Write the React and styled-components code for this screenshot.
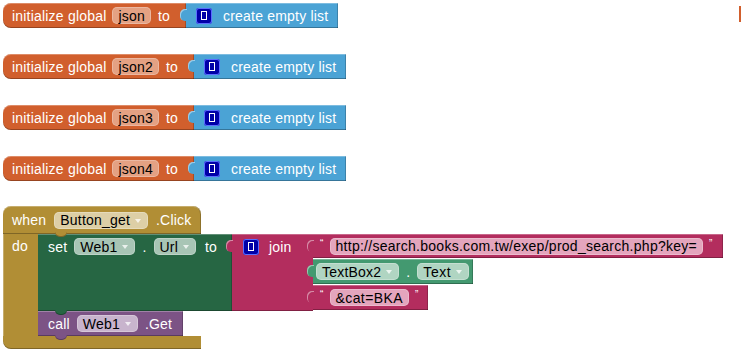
import React from "react";
import styled, { createGlobalStyle } from "styled-components";

const Global = createGlobalStyle`
  html, body { margin: 0; padding: 0; background: #fff; }
  body {
    font-family: "Liberation Sans", Arial, sans-serif;
    font-size: 14px;
    letter-spacing: 0.2px;
  }
`;

const ORANGE = "#d15f2d";
const BLUE = "#4ba3d5";
const GOLD = "#b18e35";
const GREEN = "#266643";
const MAGENTA = "#b32d5e";
const PURPLE = "#7c5385";
const TEAL = "#439970";

const Workspace = styled.div`
  position: relative;
  width: 741px;
  height: 352px;
  overflow: hidden;
  padding: 3px 0 0 3px;
  box-sizing: border-box;
  display: flex;
  flex-direction: column;
  align-items: flex-start;
  gap: 26px;
`;

const Row = styled.div`
  display: flex;
  align-items: ${(p) => p.$align ?? "stretch"};
  gap: ${(p) => p.$gap ?? 0}px;
  height: ${(p) => (p.$h ? `${p.$h}px` : "auto")};
`;

const Block = styled.div`
  position: relative;
  display: flex;
  align-items: center;
  gap: ${(p) => p.$gap ?? 7}px;
  height: ${(p) => p.$h ?? 25}px;
  width: ${(p) => (p.$w ? `${p.$w}px` : "auto")};
  padding: 0 ${(p) => p.$pr ?? 8}px 0 ${(p) => p.$pl ?? 9}px;
  background: ${(p) => p.$c};
  color: #fff;
  white-space: nowrap;
  box-sizing: border-box;
  border-radius: ${(p) => p.$r ?? "0"};
  box-shadow: inset 0 1px 0 rgba(255, 255, 255, 0.28),
    inset 0 -1px 0 rgba(0, 0, 0, 0.28), inset -1px 0 0 rgba(0, 0, 0, 0.2);
`;

/* output tab of a value block, sticking into its parent's socket */
const Value = styled(Block)`
  &::before {
    content: "";
    position: absolute;
    left: -6px;
    top: ${(p) => p.$tab ?? 6}px;
    width: 7px;
    height: 12px;
    background: ${(p) => p.$c};
    border-radius: 5px 0 0 5px;
    box-shadow: inset 1px 1px 0 rgba(255, 255, 255, 0.45);
  }
`;

/* statement block with the tab under it that the next block hooks onto */
const Statement = styled(Block)`
  &::after {
    content: "";
    position: absolute;
    left: 17px;
    bottom: -4px;
    width: 12px;
    height: 5px;
    background: ${(p) => p.$c};
    border-radius: 0 0 5px 5px;
    box-shadow: inset 0 -1px 0 rgba(0, 0, 0, 0.28);
    z-index: 2;
  }
`;

const Field = styled.span`
  display: inline-flex;
  align-items: center;
  gap: 5px;
  height: 17px;
  padding: 0 ${(p) => (p.$drop ? 7 : 6)}px 0 6px;
  border-radius: 5px;
  background: ${(p) => p.$bg};
  color: #000;
  letter-spacing: ${(p) => p.$ls ?? 0.2}px;
  box-shadow: inset 0 0 0 1px rgba(255, 255, 255, 0.25);
`;

const Arrow = styled.span`
  width: 0;
  height: 0;
  border-left: 3px solid transparent;
  border-right: 3px solid transparent;
  border-top: 4px solid rgba(255, 255, 255, 0.75);
  margin-top: 1px;
`;

const ListIcon = styled.span`
  display: inline-flex;
  align-items: center;
  justify-content: center;
  flex: none;
  width: 16px;
  height: 16px;
  border-radius: 3px;
  background: #0000a8;
  box-shadow: inset 0 0 0 1px #5a6cff;
  &::after {
    content: "";
    width: 4px;
    height: 7px;
    border: 1px solid #fff;
  }
`;

const Quote = styled.span`
  font-size: 10px;
  align-self: flex-start;
  margin-top: 4px;
`;

/* event block */
const Event = styled.div`
  display: flex;
  flex-direction: column;
  align-items: flex-start;
  margin-top: -1px;
`;

const EventHead = styled(Statement)`
  width: 198px;
  height: 28px;
  gap: 8px;
  border-radius: 8px 8px 0 0;
  &::after {
    left: 52px;
    bottom: -3px;
  }
`;

const DoCol = styled.div`
  width: 35px;
  background: ${GOLD};
  color: #fff;
  padding: 4px 0 0 9px;
  box-sizing: border-box;
  box-shadow: inset 1px 0 0 rgba(255, 255, 255, 0.28);
`;

const Stack = styled.div`
  display: flex;
  flex-direction: column;
  align-items: flex-start;
`;

const SetBlock = styled(Statement)`
  width: 194px;
  height: 77px;
  align-items: flex-start;
  padding-top: 3px;
  padding-left: 10px;
`;

const JoinBlock = styled(Value)`
  width: 81px;
  height: 77px;
  align-items: flex-start;
  padding: 3px 0 0 11px;
  gap: 10px;
  box-shadow: inset 0 1px 0 rgba(255, 255, 255, 0.28),
    inset 0 -1px 0 rgba(0, 0, 0, 0.28);
`;

const JoinLabel = styled.div`
  display: flex;
  align-items: center;
  gap: 10px;
  height: 19px;
`;

const Inputs = styled.div`
  display: flex;
  flex-direction: column;
  align-items: flex-start;
  gap: 1px;
`;

const EventFoot = styled.div`
  width: 198px;
  height: 13px;
  background: ${GOLD};
  border-radius: 0 0 0 8px;
  box-shadow: inset 0 -1px 0 rgba(0, 0, 0, 0.28);
`;

const Stray = styled.div`
  position: absolute;
  left: 739px;
  top: 6px;
  width: 2px;
  height: 16px;
  background: ${ORANGE};
`;

const GlobalInit = ({ name }) => (
  <Row>
    <Block $c={ORANGE} $r="8px 0 0 8px" $gap={6} $pr={16}>
      initialize global <Field $bg="#e4a183">{name}</Field>
      <span style={{ marginLeft: 1 }}>to</span>
    </Block>
    <Value $c={BLUE} $pl={10} $pr={10} $gap={11}>
      <ListIcon />
      create empty list
    </Value>
  </Row>
);

export default function App() {
  return (
    <>
      <Global />
      <Workspace>
        <GlobalInit name="json" />
        <GlobalInit name="json2" />
        <GlobalInit name="json3" />
        <GlobalInit name="json4" />
        <Event>
          <EventHead $c={GOLD}>
            when
            <Field $bg="#ddcfa6" $drop>
              Button_get <Arrow />
            </Field>
            .Click
          </EventHead>
          <Row>
            <DoCol>do</DoCol>
            <Stack>
              <Row>
                <SetBlock $c={GREEN}>
                  <Row $align="center" $gap={7} $h={19}>
                    set
                    <Field $bg="#a8c5b5" $drop>
                      Web1 <Arrow />
                    </Field>
                    .
                    <Field $bg="#a8c5b5" $drop>
                      Url <Arrow />
                    </Field>
                    <span style={{ marginLeft: 2 }}>to</span>
                  </Row>
                </SetBlock>
                <JoinBlock $c={MAGENTA}>
                  <JoinLabel>
                    <ListIcon />
                    join
                  </JoinLabel>
                </JoinBlock>
                <Inputs>
                  <Value $c={MAGENTA} $h={24} $pl={7} $pr={10} $gap={6}>
                    <Quote>“</Quote>
                    <Field $bg="#e4a5bd" $ls={0.27}>
                      http://search.books.com.tw/exep/prod_search.php?key=
                    </Field>
                    <Quote>”</Quote>
                  </Value>
                  <Value $c={TEAL} $h={25} $pl={3} $pr={4} $gap={7}>
                    <Field $bg="#b0d5c2" $drop>
                      TextBox2 <Arrow />
                    </Field>
                    .
                    <Field $bg="#b0d5c2" $drop $ls={0.6}>
                      Text <Arrow />
                    </Field>
                  </Value>
                  <Value $c={MAGENTA} $h={25} $pl={7} $pr={10} $gap={6}>
                    <Quote>“</Quote>
                    <Field $bg="#e4a5bd" $ls={0.4}>&amp;cat=BKA</Field>
                    <Quote>”</Quote>
                  </Value>
                </Inputs>
              </Row>
              <Statement $c={PURPLE} $pl={10} $pr={7} $w={145}>
                call
                <Field $bg="#c8b4cd" $drop>
                  Web1 <Arrow />
                </Field>
                .Get
              </Statement>
            </Stack>
          </Row>
          <EventFoot />
        </Event>
        <Stray />
      </Workspace>
    </>
  );
}
